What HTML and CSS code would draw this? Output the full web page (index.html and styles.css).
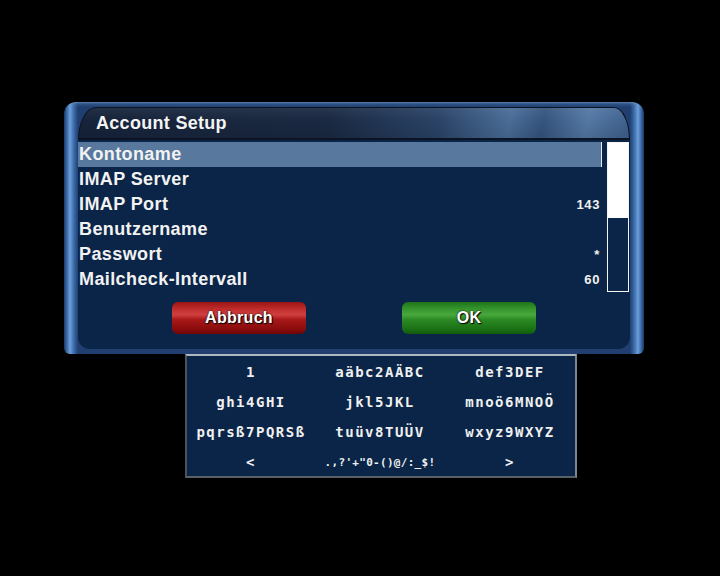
FILE: index.html
```html
<!DOCTYPE html>
<html>
<head>
<meta charset="utf-8">
<link rel="stylesheet" href="styles.css">
</head>
<body>
<div class="screen">
  <div class="window">
    <div class="title">Account Setup</div>
    <div class="panel">
      <div class="content">
        <div class="list">
          <div class="row selected"><span>Kontoname</span><span class="val"></span></div>
          <div class="row"><span>IMAP Server</span><span class="val"></span></div>
          <div class="row"><span>IMAP Port</span><span class="val">143</span></div>
          <div class="row"><span>Benutzername</span><span class="val"></span></div>
          <div class="row"><span>Passwort</span><span class="val">*</span></div>
          <div class="row"><span>Mailcheck-Intervall</span><span class="val">60</span></div>
        </div>
        <div class="scrollbar"><div class="thumb"></div></div>
      </div>
      <div class="buttons">
        <div class="btn red">Abbruch</div>
        <div class="btn green">OK</div>
      </div>
    </div>
  </div>
  <div class="keyboard">
    <div class="key">1</div>
    <div class="key">aäbc2AÄBC</div>
    <div class="key">def3DEF</div>
    <div class="key">ghi4GHI</div>
    <div class="key">jkl5JKL</div>
    <div class="key">mnoö6MNOÖ</div>
    <div class="key">pqrsß7PQRSß</div>
    <div class="key">tuüv8TUÜV</div>
    <div class="key">wxyz9WXYZ</div>
    <div class="key">&lt;</div>
    <div class="key small">.,?'+"0-()@/:_$!</div>
    <div class="key">&gt;</div>
  </div>
</div>
</body>
</html>
```

FILE: styles.css
```css
html, body {
  margin: 0;
  padding: 0;
  background: #000;
}

.screen {
  width: 720px;
  height: 576px;
  background: #000;
  display: flex;
  flex-direction: column;
  padding-top: 102px;
  box-sizing: border-box;
  font-family: "Liberation Sans", Arial, sans-serif;
  color: #f2f2f2;
}

.window {
  margin-left: 64px;
  width: 580px;
  height: 252px;
  box-sizing: border-box;
  padding: 5px 14px 5px 14px;
  border-radius: 12px 12px 6px 6px;
  display: flex;
  flex-direction: column;
  background:
    linear-gradient(180deg, rgba(140,180,230,0.55) 0, rgba(90,140,200,0.25) 2px, rgba(0,0,0,0) 5px),
    linear-gradient(90deg, #1a3866 0, #4a7cbc 4px, #6f9fd8 6px, #3a6aa8 10px, #203f70 14px, #203f70 566px, #3a6aa8 570px, #6f9fd8 574px, #4a7cbc 576px, #1a3866 580px);
}

.title {
  height: 33px;
  flex: none;
  box-sizing: border-box;
  border: 1px solid #0b1424;
  border-bottom: 2px solid #0b1424;
  border-radius: 18px 16px 0 0 / 33px 33px 0 0;
  padding-left: 17px;
  line-height: 30px;
  font-weight: bold;
  font-size: 18px;
  letter-spacing: 0.3px;
  color: #f4f4f4;
  background:
    linear-gradient(180deg, rgba(255,255,255,0.06) 0, rgba(0,0,0,0) 40%, rgba(0,0,0,0.1) 100%),
    linear-gradient(100deg, #16233a 0%, #1a2942 45%, #2a4366 65%, #4a6d98 78%, #35547e 84%, #5478a4 92%, #3e5f8c 100%);
}

.panel {
  flex: 1;
  background: #0a2547;
  border-radius: 0 0 12px 12px;
  padding-top: 2px;
  display: flex;
  flex-direction: column;
}

.content {
  display: flex;
  align-items: flex-start;
}

.list {
  width: 524px;
  display: flex;
  flex-direction: column;
}

.row {
  height: 25px;
  display: flex;
  justify-content: space-between;
  align-items: center;
  padding-left: 1px;
  padding-right: 2px;
  font-weight: bold;
  font-size: 18px;
  letter-spacing: 0.4px;
}

.row.selected {
  background: #58799d;
  box-shadow: inset -1px 0 0 #e8eef5;
}

.val {
  font-size: 13px;
  letter-spacing: 0.6px;
}

.scrollbar {
  margin-left: 5px;
  width: 22px;
  height: 150px;
  box-sizing: border-box;
  border: 1px solid #f4f4f4;
}

.thumb {
  height: 75px;
  background: #ffffff;
}

.buttons {
  display: flex;
  margin-top: 10px;
  padding-left: 94px;
  gap: 96px;
}

.btn {
  width: 134px;
  height: 32px;
  border-radius: 6px;
  display: flex;
  align-items: center;
  justify-content: center;
  font-weight: bold;
  font-size: 16px;
  letter-spacing: 0.3px;
  color: #ffffff;
  text-shadow: 1px 1px 1px #000, 0 0 2px #000;
}

.btn.red {
  background: linear-gradient(180deg, #9c1414 0%, #c43030 25%, #d04040 40%, #a81818 55%, #8a0c0c 85%, #6e0606 100%);
}

.btn.green {
  background: linear-gradient(180deg, #1e7418 0%, #3a9a30 25%, #48a83c 40%, #2c8a24 55%, #1a7014 85%, #125a0e 100%);
}

.keyboard {
  margin-left: 185px;
  width: 392px;
  height: 124px;
  box-sizing: border-box;
  background: #0a2547;
  border-top: 2px solid #aeb6be;
  border-left: 2px solid #4a525a;
  border-right: 2px solid #7d868e;
  border-bottom: 2px solid #5a6068;
  padding-left: 4px;
  padding-top: 1px;
  display: grid;
  grid-template-columns: 120px 138px 122px;
  grid-auto-rows: 30px;
  justify-items: center;
  align-items: center;
  font-family: "DejaVu Sans Mono", monospace;
  font-weight: bold;
  font-size: 14px;
  letter-spacing: 1.5px;
  color: #f0f0f0;
  overflow: hidden;
}

.key.small {
  font-size: 11px;
  letter-spacing: 0.3px;
}
```
